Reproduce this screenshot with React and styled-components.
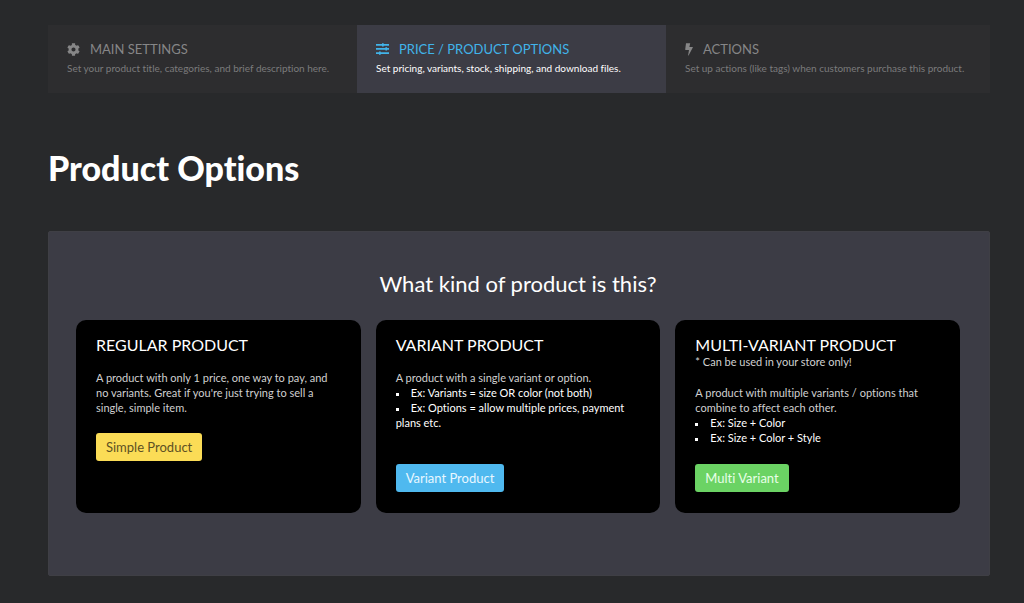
import React from "react";
import styled, { createGlobalStyle } from "styled-components";
import { FaCog } from "react-icons/fa";

const GlobalStyle = createGlobalStyle`
  *, *::before, *::after { box-sizing: border-box; }
  body {
    margin: 0;
    background: #28292b;
    color: #fff;
    font-family: Lato, "Liberation Sans", sans-serif;
    font-variant-ligatures: none;
  }
  h1, h2, h3, p, ul { margin: 0; padding: 0; font-weight: 400; }
`;

const Page = styled.main`
  padding: 25px 34px 27px 48px;
`;

const Tabs = styled.nav`
  display: grid;
  grid-template-columns: 309fr 309fr 324fr;
`;

const Tab = styled.a`
  display: block;
  padding: 14px 0 16px 19px;
  text-decoration: none;
  white-space: nowrap;
  color: ${(p) => (p.$active ? "#fff" : "#7b7b7c")};
  background: ${(p) => (p.$active ? "#3c3c45" : "#2d2d2f")};
`;

const TabTitle = styled.span`
  display: flex;
  align-items: center;
  gap: 10px;
  font-size: 13px;
  line-height: 20px;
  text-transform: uppercase;
  color: ${(p) => (p.$active ? "#41b4ea" : "#868687")};
`;

const TabText = styled.span`
  display: block;
  font-size: 10px;
  line-height: 18px;
`;

const Title = styled.h1`
  margin: 51px 0 39px;
  font-size: 34px;
  line-height: 48px;
  font-weight: 900;
`;

const Panel = styled.section`
  padding: 36px 29px 62px 27px;
  border: 1px solid #3f3f45;
  border-radius: 2px;
  background: #3c3c45;
`;

const Question = styled.h2`
  margin-bottom: 20px;
  font-size: 22px;
  line-height: 32px;
  text-align: center;
`;

const Cards = styled.div`
  display: grid;
  grid-template-columns: repeat(3, 1fr);
  gap: 15px;
`;

const Card = styled.article`
  display: flex;
  flex-direction: column;
  align-items: flex-start;
  min-height: 193px;
  padding: 16px 20px 21px;
  border-radius: 10px;
  background: #000;
`;

const CardTitle = styled.h3`
  font-size: 16px;
  line-height: 18px;
  text-transform: uppercase;
`;

const CardText = styled.p`
  margin-bottom: ${(p) => (p.$spaced ? "16px" : "0")};
  font-size: 11px;
  line-height: 15px;
  color: #d0d0d0;
`;

const CardBody = styled.div`
  margin-top: ${(p) => (p.$offset ? "16px" : "0")};
  margin-bottom: 18px;
`;

const Examples = styled.ul`
  font-size: 11px;
  line-height: 15px;
  list-style: none;
`;

const Example = styled.li`
  &::before {
    content: "";
    display: inline-block;
    width: 3px;
    height: 3px;
    margin-right: 12px;
    vertical-align: 1px;
    background: #fff;
  }
`;

const Button = styled.button`
  height: 28px;
  margin-top: ${(p) => (p.$bottom ? "auto" : "0")};
  padding: 0 10px;
  border: 0;
  border-radius: 3px;
  font-family: inherit;
  font-size: 13px;
  line-height: 28px;
  font-variant-ligatures: none;
  color: ${(p) => p.$color};
  background: ${(p) => p.$background};
`;

const SlidersIcon = () => (
  <svg width="13" height="12" viewBox="0 0 13 12" fill="currentColor" aria-hidden="true">
    <path d="M0 1h13v1.7H0zM0 5.1h13v1.7H0zM0 9.2h13v1.7H0z" />
    <path d="M6 0.2h1.7v3.3H6zM9.4 4.3h1.7v3.3H9.4zM3 8.4h1.7v3.3H3z" />
  </svg>
);

const BoltIcon = () => (
  <svg width="8" height="13" viewBox="0 0 8 13" fill="currentColor" aria-hidden="true">
    <path d="M1 0.3h4.2L4.4 4h3.2q.5 0 .2.6L3.6 12.4q-.4.4-.5-.1L4 7H.6Q.1 7 .2 6.4Z" />
  </svg>
);

const tabs = [
  { title: "Main Settings", text: "Set your product title, categories, and brief description here.", icon: <FaCog size={13} /> },
  { title: "Price / Product Options", text: "Set pricing, variants, stock, shipping, and download files.", icon: <SlidersIcon />, active: true },
  { title: "Actions", text: "Set up actions (like tags) when customers purchase this product.", icon: <BoltIcon /> },
];

const products = [
  {
    title: "Regular Product",
    text: "A product with only 1 price, one way to pay, and no variants. Great if you're just trying to sell a single, simple item.",
    button: "Simple Product",
    color: "#5d5124",
    background: "#fbdc56",
  },
  {
    title: "Variant Product",
    text: "A product with a single variant or option.",
    examples: ["Ex: Variants = size OR color (not both)", "Ex: Options = allow multiple prices, payment plans etc."],
    button: "Variant Product",
    color: "#e8f7ff",
    background: "#4fb9ef",
    bottom: true,
  },
  {
    title: "Multi-Variant Product",
    note: "* Can be used in your store only!",
    text: "A product with multiple variants / options that combine to affect each other.",
    examples: ["Ex: Size + Color", "Ex: Size + Color + Style"],
    button: "Multi Variant",
    color: "#e8ffe8",
    background: "#6bd364",
    bottom: true,
  },
];

export default function App() {
  return (
    <>
      <GlobalStyle />
      <Page>
        <Tabs>
          {tabs.map((t) => (
            <Tab key={t.title} href="#" $active={t.active}>
              <TabTitle $active={t.active}>
                {t.icon}
                {t.title}
              </TabTitle>
              <TabText>{t.text}</TabText>
            </Tab>
          ))}
        </Tabs>
        <Title>Product Options</Title>
        <Panel>
          <Question>What kind of product is this?</Question>
          <Cards>
            {products.map((p) => (
              <Card key={p.title}>
                <CardTitle>{p.title}</CardTitle>
                {p.note && <CardText $spaced>{p.note}</CardText>}
                <CardBody $offset={!p.note}>
                  <CardText>{p.text}</CardText>
                  {p.examples && (
                    <Examples>
                      {p.examples.map((e) => (
                        <Example key={e}>{e}</Example>
                      ))}
                    </Examples>
                  )}
                </CardBody>
                <Button type="button" $color={p.color} $background={p.background} $bottom={p.bottom}>
                  {p.button}
                </Button>
              </Card>
            ))}
          </Cards>
        </Panel>
      </Page>
    </>
  );
}
